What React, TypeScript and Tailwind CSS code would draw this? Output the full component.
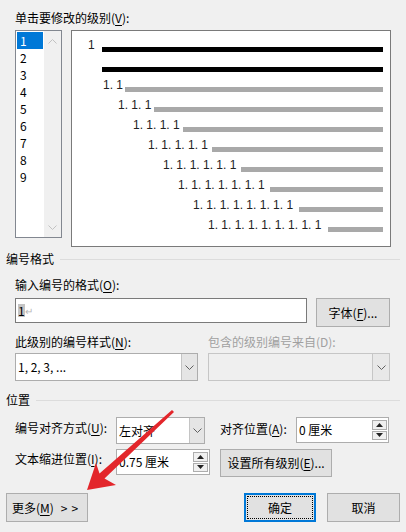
import type { ReactNode } from "react";

const levels = [
  { text: "1", pad: "pl-[16px]", w: "w-[14px]", line: "bg-black" },
  { text: "", pad: "pl-[16px]", w: "w-[14px]", line: "bg-black" },
  { text: "1. 1", pad: "pl-[31px]", w: "w-[22px]", line: "bg-[#a9a9a9]" },
  { text: "1. 1. 1", pad: "pl-[46px]", w: "w-[36px]", line: "bg-[#a9a9a9]" },
  { text: "1. 1. 1. 1", pad: "pl-[61px]", w: "w-[50px]", line: "bg-[#a9a9a9]" },
  { text: "1. 1. 1. 1. 1", pad: "pl-[76px]", w: "w-[64px]", line: "bg-[#a9a9a9]" },
  { text: "1. 1. 1. 1. 1. 1", pad: "pl-[91px]", w: "w-[78px]", line: "bg-[#a9a9a9]" },
  { text: "1. 1. 1. 1. 1. 1. 1", pad: "pl-[106px]", w: "w-[92px]", line: "bg-[#a9a9a9]" },
  { text: "1. 1. 1. 1. 1. 1. 1. 1", pad: "pl-[121px]", w: "w-[106px]", line: "bg-[#a9a9a9]" },
  { text: "1. 1. 1. 1. 1. 1. 1. 1. 1", pad: "pl-[136px]", w: "w-[120px]", line: "bg-[#a9a9a9]" },
];

// 访问键下划线
function U({ children }: { children: ReactNode }) {
  return <span className="underline underline-offset-2 decoration-1">{children}</span>;
}

function Chevron({ up = false, color = "#606060" }: { up?: boolean; color?: string }) {
  return (
    <svg width="9" height="5" viewBox="0 0 9 5">
      <polyline
        points={up ? "0.5,4.5 4.5,0.5 8.5,4.5" : "0.5,0.5 4.5,4.5 8.5,0.5"}
        fill="none"
        stroke={color}
        strokeWidth="1"
      />
    </svg>
  );
}

function Tri({ up = false }: { up?: boolean }) {
  return (
    <svg width="7" height="4" viewBox="0 0 7 4">
      <polygon points={up ? "0,4 3.5,0 7,4" : "0,0 7,0 3.5,4"} fill="#222" />
    </svg>
  );
}

function SectionTitle({ title }: { title: string }) {
  return (
    <div className="flex items-center gap-[6px] px-[6px]">
      <span>{title}</span>
      <div className="h-px flex-1 bg-[#dcdcdc]" />
    </div>
  );
}

function Spin({ value, w }: { value: string; w: string }) {
  return (
    <div className={`flex h-[26px] ${w} border border-[#adadad] bg-white`}>
      <div className="flex flex-1 items-center pl-[2px] whitespace-nowrap">{value}</div>
      <div className="flex w-[16px] flex-col gap-[1px] py-[2px] pr-[1px]">
        <div className="flex flex-1 items-center justify-center border border-[#adadad] bg-[#f0f0f0]">
          <Tri up />
        </div>
        <div className="flex flex-1 items-center justify-center border border-[#adadad] bg-[#f0f0f0]">
          <Tri />
        </div>
      </div>
    </div>
  );
}

const btn = "flex items-center justify-center border border-[#adadad] bg-[#e1e1e1]";

export default function App() {
  return (
    <div className="relative h-[532px] w-[406px] overflow-hidden bg-[#f0f0f0] font-['Noto_Sans_CJK_SC',sans-serif] text-[12px] leading-[16px] text-black">
      <div className="px-[15px] pt-[10px]">
        <div>
          单击要修改的级别(<U>V</U>):
        </div>
        <div className="mt-[4px] flex items-start">
          {/* 级别列表 */}
          <div className="flex h-[208px] w-[47px] border border-[#828790] bg-white">
            <div className="w-[28px] px-[1px] pt-[1px]">
              {["1", "2", "3", "4", "5", "6", "7", "8", "9"].map((n, i) => (
                <div
                  key={n}
                  className={
                    i === 0
                      ? "h-[17px] bg-[#0078d7] pl-[3px] leading-[17px] text-white"
                      : "h-[17px] pl-[3px] leading-[17px]"
                  }
                >
                  {n}
                </div>
              ))}
            </div>
            <div className="flex flex-1 flex-col items-center justify-between bg-[#f0f0f0] pt-[8px] pb-[7px]">
              <Chevron up color="#c2c2c2" />
              <Chevron color="#c2c2c2" />
            </div>
          </div>

          {/* 预览 */}
          <div className="ml-[9px] h-[217px] w-[320px] border border-[#7a7a7a] bg-white pt-[1px] pr-[7px]">
            {levels.map((l, i) => (
              <div key={i} className={`flex h-[20px] items-end ${l.pad}`}>
                <div
                  className={`${l.w} mb-[1px] shrink-0 whitespace-nowrap font-['Liberation_Sans',sans-serif] text-[12px] leading-[12px] text-[#222]`}
                >
                  {l.text}
                </div>
                <div className={`h-[5px] flex-1 ${l.line}`} />
              </div>
            ))}
          </div>
        </div>
      </div>

      <div className="mt-[4px]">
        <SectionTitle title="编号格式" />
      </div>
      <div className="px-[15px]">
        <div className="mt-[10px]">
          输入编号的格式(<U>O</U>):
        </div>
        <div className="mt-[5px] flex items-start">
          <div className="flex h-[25px] w-[292px] items-center border border-[#7a7a7a] bg-white pl-[2px]">
            <span className="bg-[#c4c4c4] leading-[13px]">1</span>
            <span className="text-[10px] text-[#b8b8b8]">↵</span>
          </div>
          <div className={`ml-[9px] h-[29px] w-[74px] ${btn}`}>
            字体(<U>F</U>)...
          </div>
        </div>

        <div className="mt-[7px] flex">
          <div className="w-[193px]">
            此级别的编号样式(<U>N</U>):
          </div>
          <div className="text-[#a0a0a0]">包含的级别编号来自(D):</div>
        </div>
        <div className="mt-[3px] flex">
          <div className="flex h-[28px] w-[183px] border border-[#adadad] bg-white">
            <div className="flex flex-1 items-center pl-[2px]">1, 2, 3, ...</div>
            <div className="flex w-[16px] items-center justify-center border-l border-[#c4c4c4] bg-[#e5e5e5]">
              <Chevron />
            </div>
          </div>
          <div className="ml-[10px] flex h-[28px] w-[182px] border border-[#c6c6c6] bg-[#efefef]">
            <div className="flex-1" />
            <div className="flex w-[17px] items-center justify-center border-l border-[#c6c6c6] bg-[#e8e8e8]">
              <Chevron />
            </div>
          </div>
        </div>
      </div>

      <div className="mt-[11px]">
        <SectionTitle title="位置" />
      </div>
      <div className="px-[15px]">
        <div className="mt-[9px] flex items-start">
          <div className="w-[101px] pt-[3px]">
            编号对齐方式(<U>U</U>):
          </div>
          <div className="flex h-[27px] w-[89px] border border-[#adadad] bg-white">
            <div className="flex flex-1 items-center pl-[2px]">左对齐</div>
            <div className="flex w-[15px] items-center justify-center border-l border-[#c4c4c4] bg-[#e5e5e5]">
              <Chevron />
            </div>
          </div>
          <div className="ml-[15px] w-[76px] pt-[4px]">
            对齐位置(<U>A</U>):
          </div>
          <Spin value="0 厘米" w="w-[93px]" />
        </div>

        <div className="mt-[5px] flex items-start">
          <div className="w-[101px] pt-[2px]">
            文本缩进位置(<U>I</U>):
          </div>
          <Spin value="0.75 厘米" w="w-[94px]" />
          <div className={`ml-[10px] h-[28px] w-[112px] ${btn}`}>
            设置所有级别(<U>E</U>)...
          </div>
        </div>
      </div>

      <div className="mt-[16px] flex px-[6px]">
        <div className={`h-[29px] w-[82px] ${btn}`}>
          更多(<U>M</U>)<span className="ml-[7px] tracking-[4px]">&gt;&gt;</span>
        </div>
        <div className="flex-1" />
        <div className="flex h-[29px] w-[72px] border-2 border-[#0078d7] bg-[#e1e1e1] p-[1px]">
          <div className="flex flex-1 items-center justify-center border border-dotted border-black">确定</div>
        </div>
        <div className={`ml-[11px] h-[29px] w-[73px] ${btn}`}>取消</div>
      </div>

      {/* 红色标注箭头 */}
      <svg className="pointer-events-none absolute left-0 top-0" width="406" height="532" viewBox="0 0 406 532">
        <polygon
          points="87,490 116,485 104.5,478.5 174,412 172,410 99.5,473.5 96,463"
          fill="#e3262b"
        />
      </svg>
    </div>
  );
}
